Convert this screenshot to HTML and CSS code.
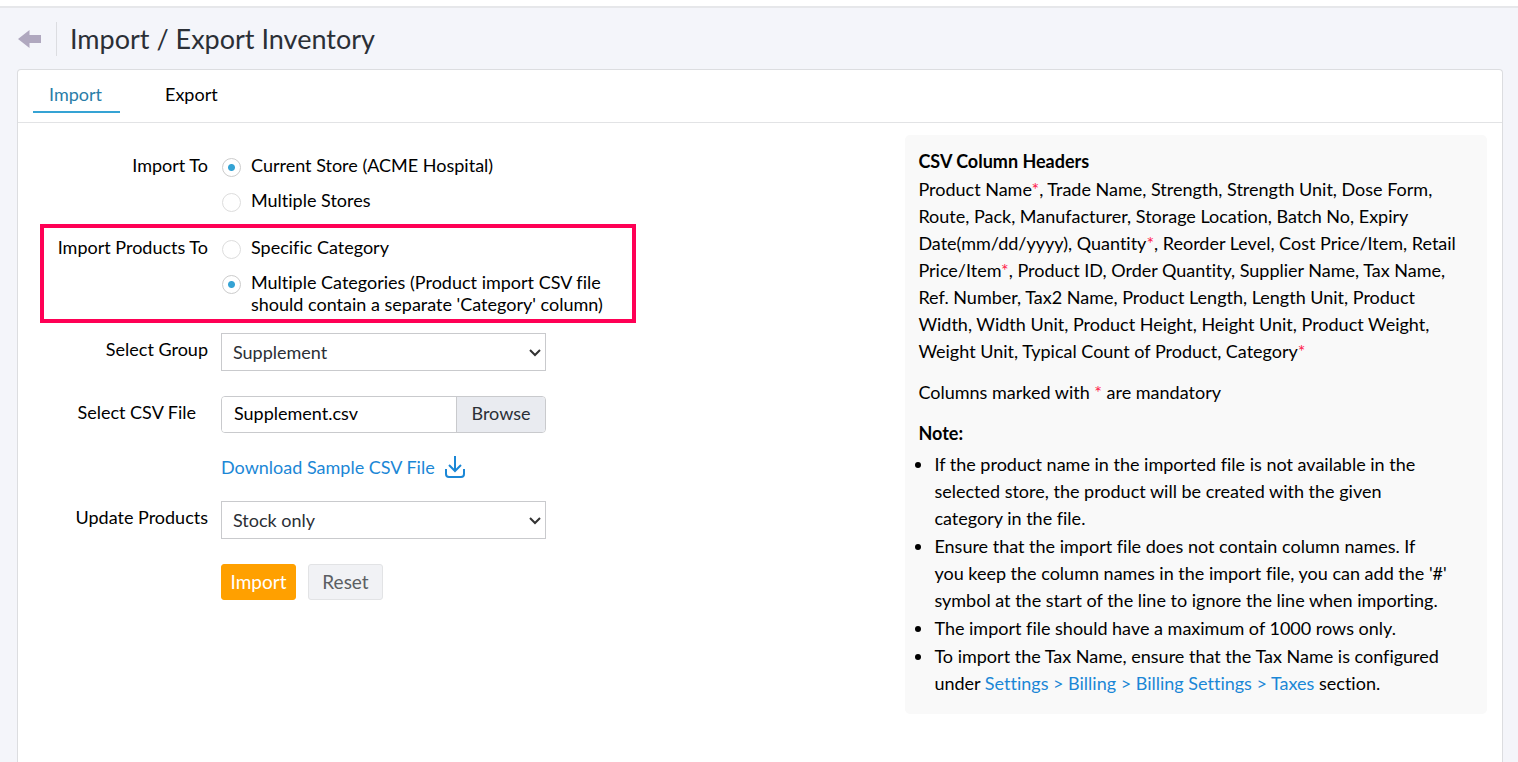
FILE: index.html
```
<!DOCTYPE html>
<html lang="en">
<head>
    <meta charset="UTF-8">
    <meta name="viewport" content="width=device-width, initial-scale=1.0">
    <title>Import / Export Inventory</title>
    <link rel="stylesheet" href="styles.css">
</head>
<body>
    <div class="topbar"></div>

    <header class="page-header">
        <a href="#" class="back-link" aria-label="Back">
            <svg width="24" height="18" viewBox="0 0 24 18">
                <path d="M0 9 L11.500 0 V5 H23 V13 H11.500 V18 Z" fill="#b0a8bf"/>
            </svg>
        </a>
        <h1>Import / Export Inventory</h1>
    </header>

    <main class="card">
        <nav class="tabs">
            <a href="#" class="tab active">Import</a>
            <a href="#" class="tab">Export</a>
        </nav>

        <div class="card-body">
            <form class="import-form">
                <div class="form-row" role="radiogroup" aria-labelledby="importTo">
                    <span class="row-label" id="importTo">Import To</span>
                    <div class="options">
                        <label class="option"><input type="radio" name="store" checked><span>Current Store (ACME Hospital)</span></label>
                        <label class="option"><input type="radio" name="store"><span>Multiple Stores</span></label>
                    </div>
                </div>

                <div class="form-row highlight" role="radiogroup" aria-labelledby="importProducts">
                    <span class="row-label" id="importProducts">Import Products To</span>
                    <div class="options">
                        <label class="option"><input type="radio" name="category"><span>Specific Category</span></label>
                        <label class="option"><input type="radio" name="category" checked><span>Multiple Categories (Product import CSV file should contain a separate 'Category' column)</span></label>
                    </div>
                </div>

                <div class="form-row field-row">
                    <label class="row-label" for="group">Select Group</label>
                    <div class="select-box">
                        <select id="group">
                            <option>Supplement</option>
                        </select>
                        <svg class="chevron" width="12" height="8" viewBox="0 0 12 8"><path d="M1 1 L6 6 L11 1" fill="none" stroke="#333" stroke-width="2"/></svg>
                    </div>
                </div>

                <div class="form-row field-row">
                    <label class="row-label file-label" for="csvFile">Select CSV File</label>
                    <div class="file-box">
                        <input type="text" id="csvFile" value="Supplement.csv" readonly>
                        <button type="button">Browse</button>
                    </div>
                </div>

                <a href="#" class="download">
                    Download Sample CSV File
                    <svg width="20" height="22" viewBox="0 0 20 22" fill="none" stroke="#1b87d6" stroke-width="2">
                        <path d="M10 0 V15 M4 9 L10 15 L16 9"/>
                        <path d="M1 13 V18 Q1 21 4 21 H16 Q19 21 19 18 V13"/>
                    </svg>
                </a>

                <div class="form-row field-row">
                    <label class="row-label" for="update">Update Products</label>
                    <div class="select-box">
                        <select id="update">
                            <option>Stock only</option>
                        </select>
                        <svg class="chevron" width="12" height="8" viewBox="0 0 12 8"><path d="M1 1 L6 6 L11 1" fill="none" stroke="#333" stroke-width="2"/></svg>
                    </div>
                </div>

                <div class="actions">
                    <button type="submit" class="btn btn-primary">Import</button>
                    <button type="reset" class="btn">Reset</button>
                </div>
            </form>

            <aside class="help">
                <h2>CSV Column Headers</h2>
                <p>Product Name<span class="req">*</span>, Trade Name, Strength, Strength Unit, Dose Form, Route, Pack, Manufacturer, Storage Location, Batch No, Expiry Date(mm/dd/yyyy), Quantity<span class="req">*</span>, Reorder Level, Cost Price/Item, Retail Price/Item<span class="req">*</span>, Product ID, Order Quantity, Supplier Name, Tax Name, Ref. Number, Tax2 Name, Product Length, Length Unit, Product Width, Width Unit, Product Height, Height Unit, Product Weight, Weight Unit, Typical Count of Product, Category<span class="req">*</span></p>
                <p>Columns marked with <span class="req">*</span> are mandatory</p>
                <h2>Note:</h2>
                <ul>
                    <li>If the product name in the imported file is not available in the selected store, the product will be created with the given<br>category in the file.</li>
                    <li>Ensure that the import file does not contain column names. If<br>you keep the column names in the import file, you can add the '#' symbol at the start of the line to ignore the line when importing.</li>
                    <li>The import file should have a maximum of 1000 rows only.</li>
                    <li>To import the Tax Name, ensure that the Tax Name is configured under <a href="#">Settings &gt; Billing &gt; Billing Settings &gt; Taxes</a> section.</li>
                </ul>
            </aside>
        </div>
    </main>
</body>
</html>
```
FILE: styles.css
```
* {
    box-sizing: border-box;
}

body {
    display: flex;
    flex-direction: column;
    min-height: 100vh;
    margin: 0;
    background: #f4f5fa;
    color: #000;
    font-family: Lato, sans-serif;
    font-size: 18px;
    font-variant-ligatures: none;
    line-height: 22px;
}

a {
    color: #1b87d6;
    text-decoration: none;
}

input, select, button {
    font: inherit;
    color: inherit;
}

.topbar {
    height: 8px;
    background: #fff;
    border-bottom: 2px solid #e6e7ea;
}

/* Page header */
.page-header {
    display: flex;
    align-items: center;
    padding: 14px 18px 13px;
}

.back-link {
    display: flex;
    padding-right: 14px;
}

h1 {
    margin: 0;
    padding-left: 13px;
    border-left: 1px solid #dcdde1;
    color: #2b2f36;
    font-size: 27px;
    font-weight: normal;
    line-height: 34px;
}

/* Card and tabs */
.card {
    flex: 1;
    margin: 0 15px 0 17px;
    background: #fff;
    border: 1px solid #dcdde0;
    border-bottom: 0;
    border-radius: 4px 4px 0 0;
}

.tabs {
    display: flex;
    gap: 29px;
    padding: 7px 15px 9px;
    border-bottom: 1px solid #e2e3e5;
}

.tab {
    padding: 6px 18px 6px 16px;
    border-bottom: 2px solid transparent;
    color: #000;
}

.tab.active {
    border-color: #35a3d4;
    color: #2a7da8;
}

.card-body {
    display: flex;
    align-items: flex-start;
    padding: 12px 15px;
}

/* Import form */
.import-form {
    flex: 1;
    padding-top: 19px;
}

.form-row {
    display: flex;
    gap: 13px;
}

.row-label {
    width: 175px;
    text-align: right;
}

.options {
    display: flex;
    flex: 1;
    flex-direction: column;
    gap: 12px;
}

.option {
    display: flex;
    gap: 10px;
    max-width: 400px;
}

.option input {
    flex: none;
    width: 19px;
    height: 19px;
    margin: 4px 0 0 1px;
    appearance: none;
    background: #fff;
    border: 1px solid #ddd;
    border-radius: 50%;
}

.option input:checked {
    border-color: #ccc;
    background: radial-gradient(circle, #35a3d4 3px, #fff 4px);
}

.highlight {
    width: 596px;
    margin: 12px 0 10px 7px;
    padding: 8px 0 4px;
    border: 4px solid #ff0055;
}

.highlight .row-label {
    width: 164px;
}

.field-row {
    margin-bottom: 25px;
}

.field-row .row-label {
    padding-top: 5px;
}

.field-row .file-label {
    padding-right: 12px;
}

.select-box {
    position: relative;
    width: 325px;
}

.select-box select {
    display: block;
    width: 100%;
    height: 38px;
    padding: 0 11px;
    appearance: none;
    background: #fff;
    border: 1px solid #c9cacd;
    border-radius: 0;
    color: #2b2f36;
}

.chevron {
    position: absolute;
    top: 16px;
    right: 5px;
    pointer-events: none;
}

.file-box {
    display: flex;
    width: 325px;
    height: 37px;
    overflow: hidden;
    border: 1px solid #c9cacd;
    border-radius: 4px;
}

.file-box input {
    flex: 1;
    min-width: 0;
    padding: 0 12px 4px;
    border: 0;
}

.file-box button {
    width: 89px;
    padding: 0 0 3px;
    background: #e9ebf0;
    border: 0;
    border-left: 1px solid #c9cacd;
    color: #2b2f36;
}

.download {
    display: flex;
    align-items: center;
    gap: 10px;
    width: max-content;
    margin: -2px 0 23px 188px;
}

.actions {
    display: flex;
    gap: 12px;
    margin-left: 188px;
}

.btn {
    width: 75px;
    height: 36px;
    padding: 0;
    background: #f1f2f5;
    border: 1px solid #e2e3e5;
    border-radius: 3px;
    color: #5c5f63;
    font-size: 19px;
}

.btn-primary {
    background: #ffa000;
    border-color: #ffa000;
    color: #fff;
}

/* Help panel */
.help {
    width: 40%;
    padding: 13px 26px 16px 13px;
    background: #f9f9f9;
    border-radius: 5px;
    line-height: 27px;
}

.help h2 {
    margin: 0 0 1px;
    font-size: 18px;
    font-weight: bold;
}

.help p {
    margin: 0 0 14px;
}

.help ul {
    margin: 4px 0 0;
    padding-left: 16px;
}

.help li {
    margin-bottom: 1px;
}

.req {
    color: #ff1a4b;
}
```
